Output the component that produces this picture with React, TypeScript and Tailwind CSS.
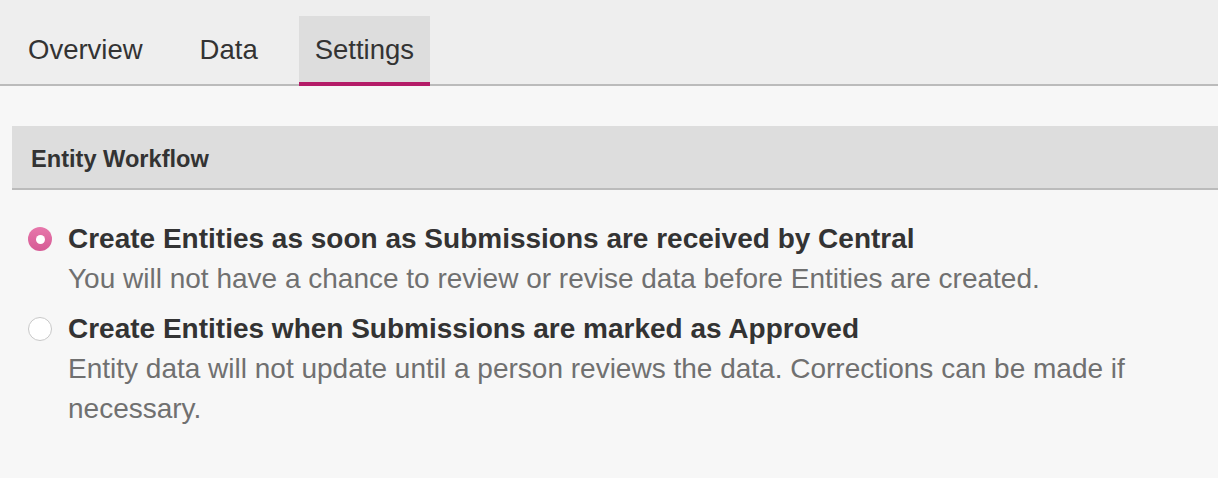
import { useState } from "react";

const tabs = ["Overview", "Data", "Settings"] as const;

const options = [
  {
    id: "received",
    label: "Create Entities as soon as Submissions are received by Central",
    help: "You will not have a chance to review or revise data before Entities are created.",
  },
  {
    id: "approved",
    label: "Create Entities when Submissions are marked as Approved",
    help: "Entity data will not update until a person reviews the data. Corrections can be made if necessary.",
  },
];

export default function App() {
  const [active, setActive] = useState<string>("Settings");
  const [workflow, setWorkflow] = useState("received");

  return (
    <div className="min-h-[478px] bg-[#f7f7f7] font-['Liberation_Sans',Arial,sans-serif] text-[#333]">
      <nav className="flex h-[86px] items-end gap-[25px] border-b-2 border-[#bbb] bg-[#eee] pl-3">
        {tabs.map((tab) => (
          <button
            key={tab}
            type="button"
            onClick={() => setActive(tab)}
            className={
              active === tab
                ? "-mb-[2px] flex h-[70px] items-center border-b-4 border-[#b41c68] bg-[#ddd] px-4 pt-[2px] text-[27.5px] leading-none"
                : "-mb-[2px] flex h-[70px] items-center border-b-4 border-transparent px-4 pt-[2px] text-[27.5px] leading-none"
            }
          >
            {tab}
          </button>
        ))}
      </nav>

      <section className="ml-3 mt-10">
        <h2 className="flex h-[64px] items-center border-b-2 border-[#bbb] bg-[#ddd] px-[19px] pt-[6px] text-[23.6px] font-bold">
          Entity Workflow
        </h2>
        <div className="flex flex-col gap-[10px] pt-[29px] pl-4 pr-[70px]">
          {options.map((opt) => {
            const checked = workflow === opt.id;
            return (
              <label key={opt.id} className="flex cursor-pointer gap-[16px]">
                <span className="flex h-[40px] shrink-0 items-center">
                  <input
                    type="radio"
                    name="workflow"
                    className="sr-only"
                    checked={checked}
                    onChange={() => setWorkflow(opt.id)}
                  />
                  {checked ? (
                    <span className="flex h-6 w-6 items-center justify-center rounded-full bg-gradient-to-b from-[#e777ab] to-[#d65a95]">
                      <span className="h-[9px] w-[9px] rounded-full bg-white" />
                    </span>
                  ) : (
                    <span className="h-6 w-6 rounded-full border border-[#c8c8c8] bg-white" />
                  )}
                </span>
                <span className="flex flex-col text-[28px] leading-[40px]">
                  <span className="font-bold text-[#333]">{opt.label}</span>
                  <span className="text-[#707070]">{opt.help}</span>
                </span>
              </label>
            );
          })}
        </div>
      </section>
    </div>
  );
}
